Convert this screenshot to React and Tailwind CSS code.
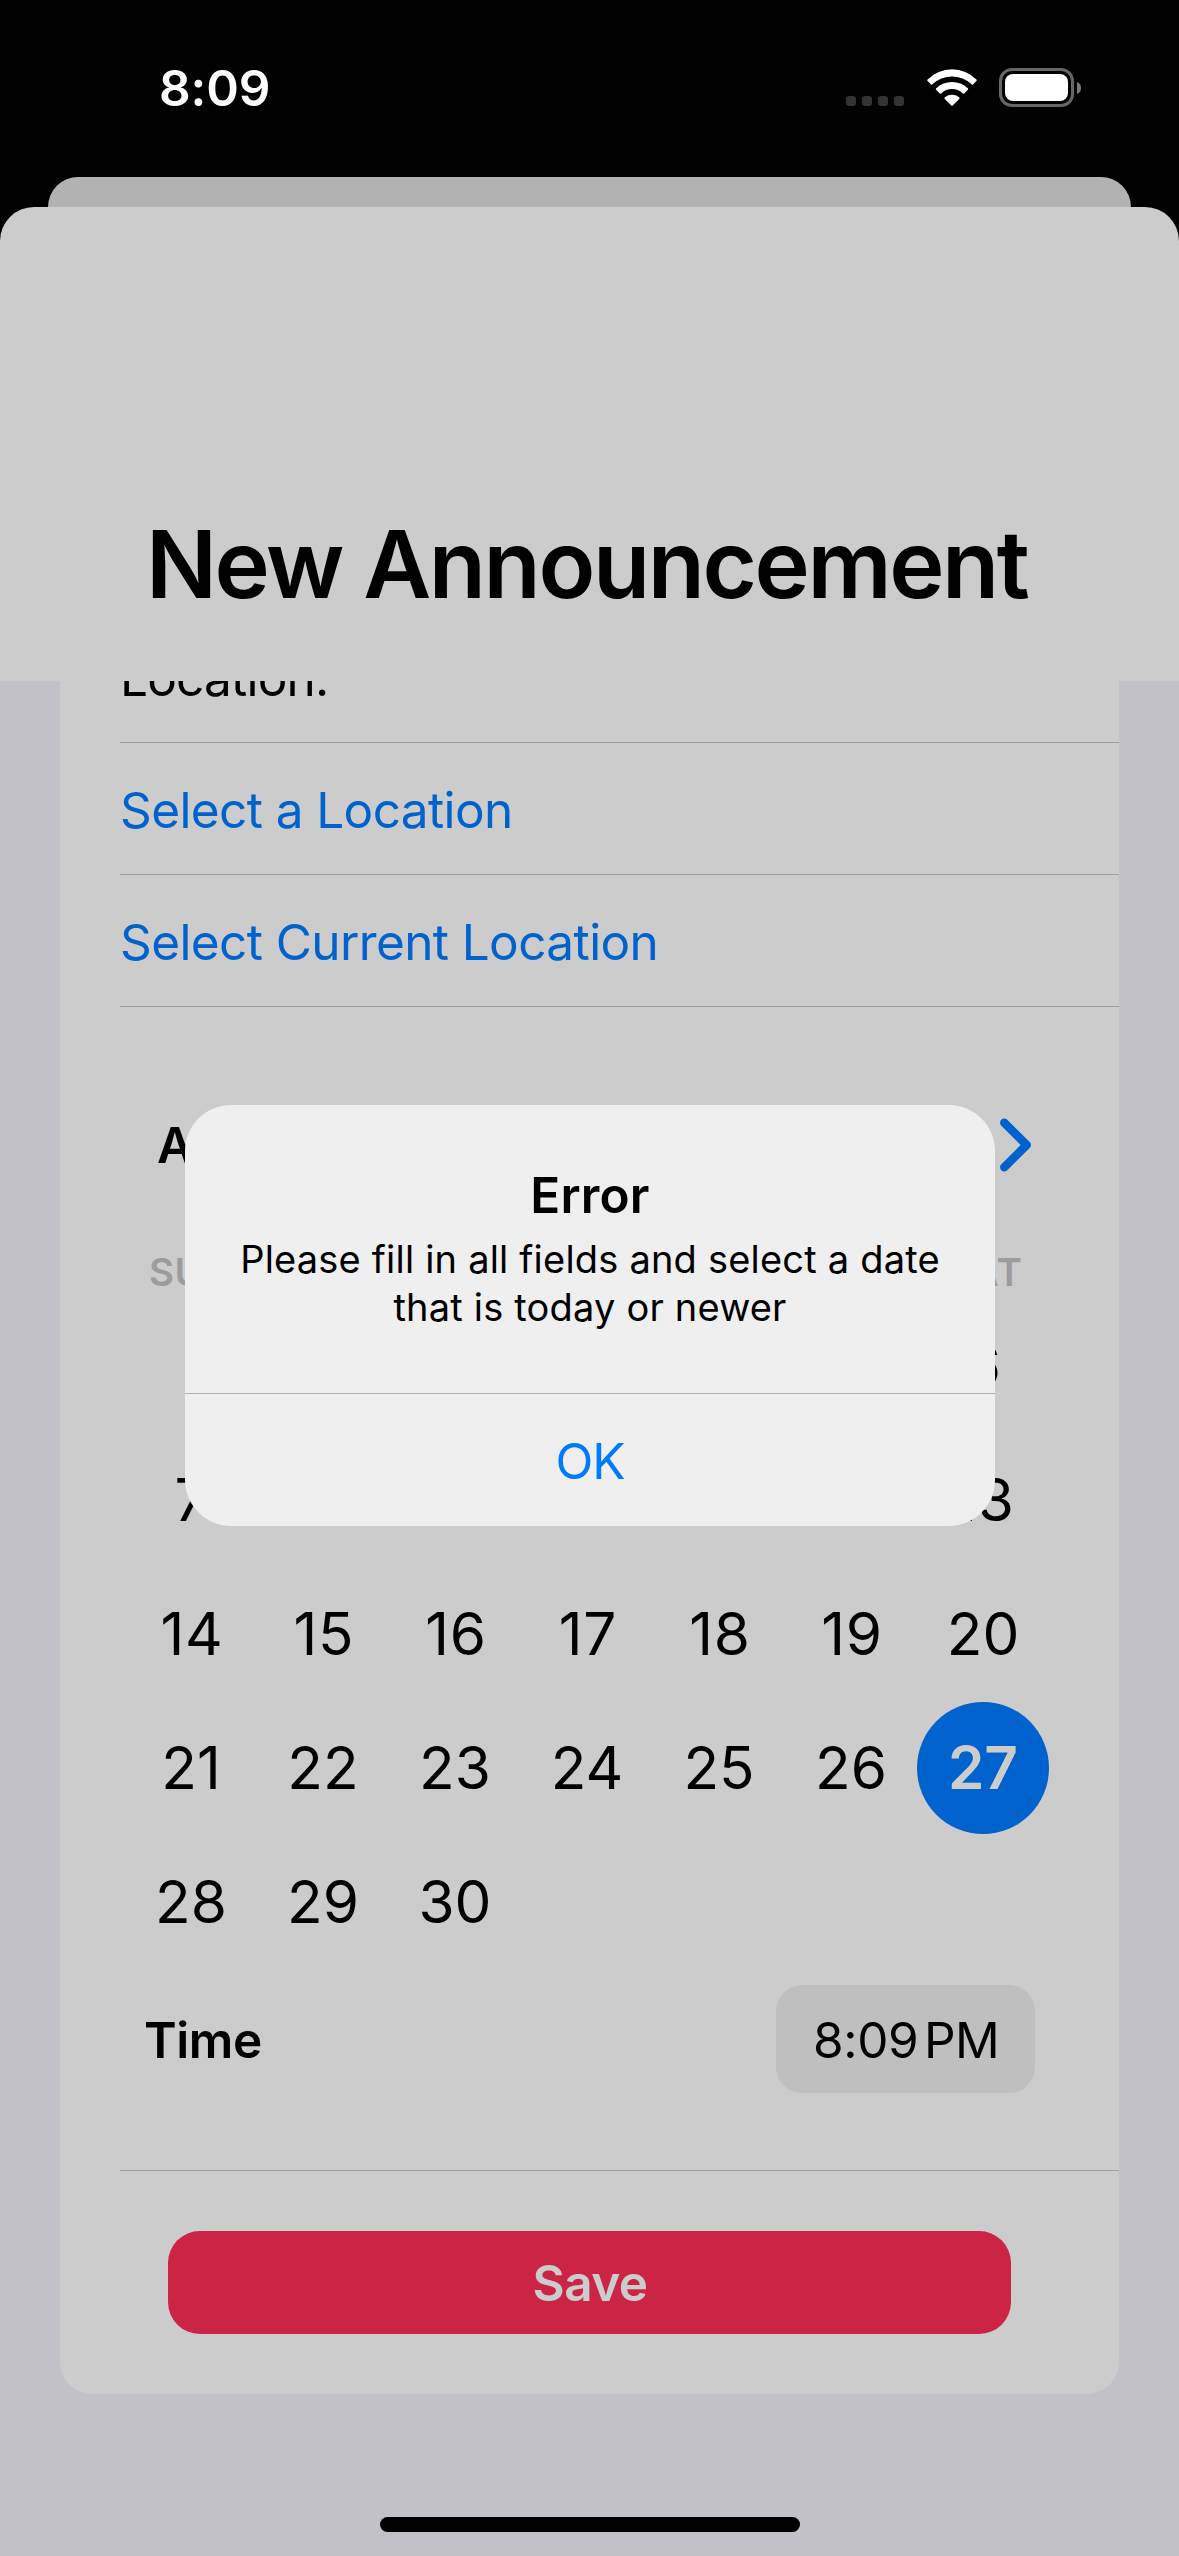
// Labels that lie entirely beneath the alert are left blank.
const WEEKDAYS = ["SUN", "", "", "", "", "", "SAT"];
const SELECTED_DAY = 27;
const DAYS = Array.from({ length: 35 }, (_, i) => (i === 6 || i === 7 || (i >= 13 && i <= 30) ? i : null));

function dayClass(day) {
  if (day === SELECTED_DAY) {
    return "flex size-[132px] items-center justify-center rounded-full bg-[#0062cc] font-semibold text-[#cccccc]";
  }
  if (day >= 10 && day < 20) {
    return "flex size-[132px] items-center justify-center pl-[2px] tracking-[0.8px]";
  }
  return "flex size-[132px] items-center justify-center";
}

function WifiIcon() {
  return (
    <svg className="h-[37px] w-[50px]" viewBox="0 0 50 37" fill="#fff">
      <path d="M0.6 10.6 A34 34 0 0 1 49.4 10.6 Q50.1 11.3 49.4 12 L46 15.4 Q45.3 16 44.6 15.3 A28.5 28.5 0 0 0 5.4 15.3 Q4.7 16 4 15.4 L0.6 12 Q-0.1 11.3 0.6 10.6Z" />
      <path d="M9.2 19.2 A23 23 0 0 1 40.8 19.2 Q41.6 20 40.9 20.8 L37.2 24.4 Q36.4 25.1 35.6 24.3 A15.5 15.5 0 0 0 14.4 24.3 Q13.6 25.1 12.8 24.4 L9.1 20.8 Q8.4 20 9.2 19.2Z" />
      <path d="M17.9 28.2 A12 12 0 0 1 32.1 28.2 Q33 29 32.2 29.9 L25.7 36.4 Q25 37.1 24.3 36.4 L17.8 29.9 Q17 29 17.9 28.2Z" />
    </svg>
  );
}

function BatteryIcon() {
  return (
    <div className="flex items-center gap-[3px]">
      <div className="h-[39px] w-[75px] rounded-[13px] border-[3px] border-[#666666] p-[3px]">
        <div className="h-full w-full rounded-[8px] bg-white" />
      </div>
      <svg className="h-[12px] w-[4px]" viewBox="0 0 4 12" fill="#7a7a7a">
        <path d="M0 0 A6.5 6.5 0 0 1 0 12Z" />
      </svg>
    </div>
  );
}

function StatusBar() {
  return (
    <div className="flex h-[177px] items-start justify-between pt-[58px] pr-[98px] pl-[159px] text-white">
      <span className="text-[49.5px] leading-[60px] font-semibold tracking-[-0.1px]">8:09</span>
      <div className="flex h-[59px] items-center">
        <div className="mt-[27px] mr-[23px] flex gap-[6px]">
          {[0, 1, 2, 3].map((i) => (
            <span key={i} className="size-[10px] rounded-[3px] bg-[#333333]" />
          ))}
        </div>
        <div className="mr-[22px] flex">
          <WifiIcon />
        </div>
        <BatteryIcon />
      </div>
    </div>
  );
}

function LinkRow({ children }) {
  return (
    <button className="flex h-[132px] w-full items-center border-b border-[#9d9d9f] pt-[3px] text-left text-[49.5px] tracking-[-0.6px] text-[#0062cc]">
      {children}
    </button>
  );
}

function Calendar() {
  return (
    <div className="ml-[5px] w-[924px]">
      <div className="flex h-[90px] items-center justify-between pr-[17px] pl-[32px]">
        <span className="text-[49.5px] font-semibold">April 2024</span>
        <svg className="h-[54px] w-[33px]" viewBox="0 0 33 54" fill="none" stroke="#0062cc" strokeWidth="8.5" strokeLinecap="round" strokeLinejoin="round">
          <path d="M5.3 4.8 L27.7 27 L5.3 49.2" />
        </svg>
      </div>
      <div className="grid h-[109px] grid-cols-7 pt-[56px] text-center text-[38.5px] leading-[53px] font-semibold text-[#9c9c9c]">
        {WEEKDAYS.map((d, i) => (
          <span key={i} className={i === 6 ? "pl-[2px] tracking-[1.2px]" : "tracking-[0.4px]"}>
            {d}
          </span>
        ))}
      </div>
      <div className="grid auto-rows-[134px] grid-cols-7 place-items-center text-[58.5px]">
        {DAYS.map((d, i) => (
          <span key={i} className={dayClass(d)}>
            {d}
          </span>
        ))}
      </div>
    </div>
  );
}

function ErrorAlert() {
  return (
    <div className="absolute top-[1105px] left-[185px] flex h-[421px] w-[810px] flex-col overflow-hidden rounded-[46px] bg-[#efefef] text-center">
      <div className="h-[289px] border-b border-[#b1b4b3] pt-[60px]">
        <h2 className="text-[49.5px] leading-[60px] font-semibold tracking-[0.2px]">Error</h2>
        <p className="pt-[9.5px] text-[38px] leading-[48px] tracking-[0.2px]">
          Please fill in all fields and select a date
          <br />
          that is today or newer
        </p>
      </div>
      <button className="flex flex-1 items-center justify-center pt-[3px] text-[49.5px] tracking-[-1.1px] text-[#007aff]">OK</button>
    </div>
  );
}

export default function App() {
  return (
    <div className="relative flex h-[2556px] w-[1179px] flex-col overflow-hidden bg-black font-['Inter',sans-serif] text-black">
      <StatusBar />
      <div className="mx-[48px] h-[30px] rounded-t-[32px] bg-[#b2b2b2]" />
      <div className="flex flex-1 flex-col overflow-hidden rounded-t-[34px] bg-[#cccccc]">
        <h1 className="h-[474px] pt-[297px] pl-[146px] text-[93.5px] leading-[120px] font-semibold tracking-[-2.42px] whitespace-nowrap">
          New Announcement
        </h1>
        <div className="flex-1 overflow-hidden bg-[#c2c1c7] px-[60px]">
          <div className="h-[1713px] rounded-b-[32px] bg-[#cccccc] pl-[60px]">
            <div className="flex h-[62px] flex-col justify-end overflow-hidden border-b border-[#9d9d9f] text-[49.5px] tracking-[-0.79px]">
              <span className="flex h-[131px] shrink-0 items-center pt-[3px]">Location:</span>
            </div>
            <LinkRow>Select a Location</LinkRow>
            <LinkRow>Select Current Location</LinkRow>
            <div className="h-[1164px] border-b border-[#9d9d9f] pt-[93px]">
              <Calendar />
              <div className="flex items-center justify-between pt-[16px] pr-[84px] pl-[24px] text-[49.5px]">
                <span className="pt-[2px] font-semibold tracking-[-0.4px]">Time</span>
                <div className="flex h-[108px] w-[259px] items-center rounded-[26px] bg-[#bfbfbf] pt-[2px] pl-[37px]">
                  <span className="w-[111px] tracking-[-0.37px]">8:09</span>
                  <span className="tracking-[-0.6px]">PM</span>
                </div>
              </div>
            </div>
            <div className="pt-[60px] pl-[48px]">
              <button className="flex h-[103px] w-[843px] items-center justify-center rounded-[32px] bg-[#cc2444] pt-[1px] pl-[1px] text-[49.5px] font-semibold tracking-[-0.6px] text-[#cccccc]">
                Save
              </button>
            </div>
          </div>
        </div>
      </div>
      <ErrorAlert />
      <div className="absolute top-[2517px] left-[380px] h-[15px] w-[420px] rounded-full bg-black" />
    </div>
  );
}
